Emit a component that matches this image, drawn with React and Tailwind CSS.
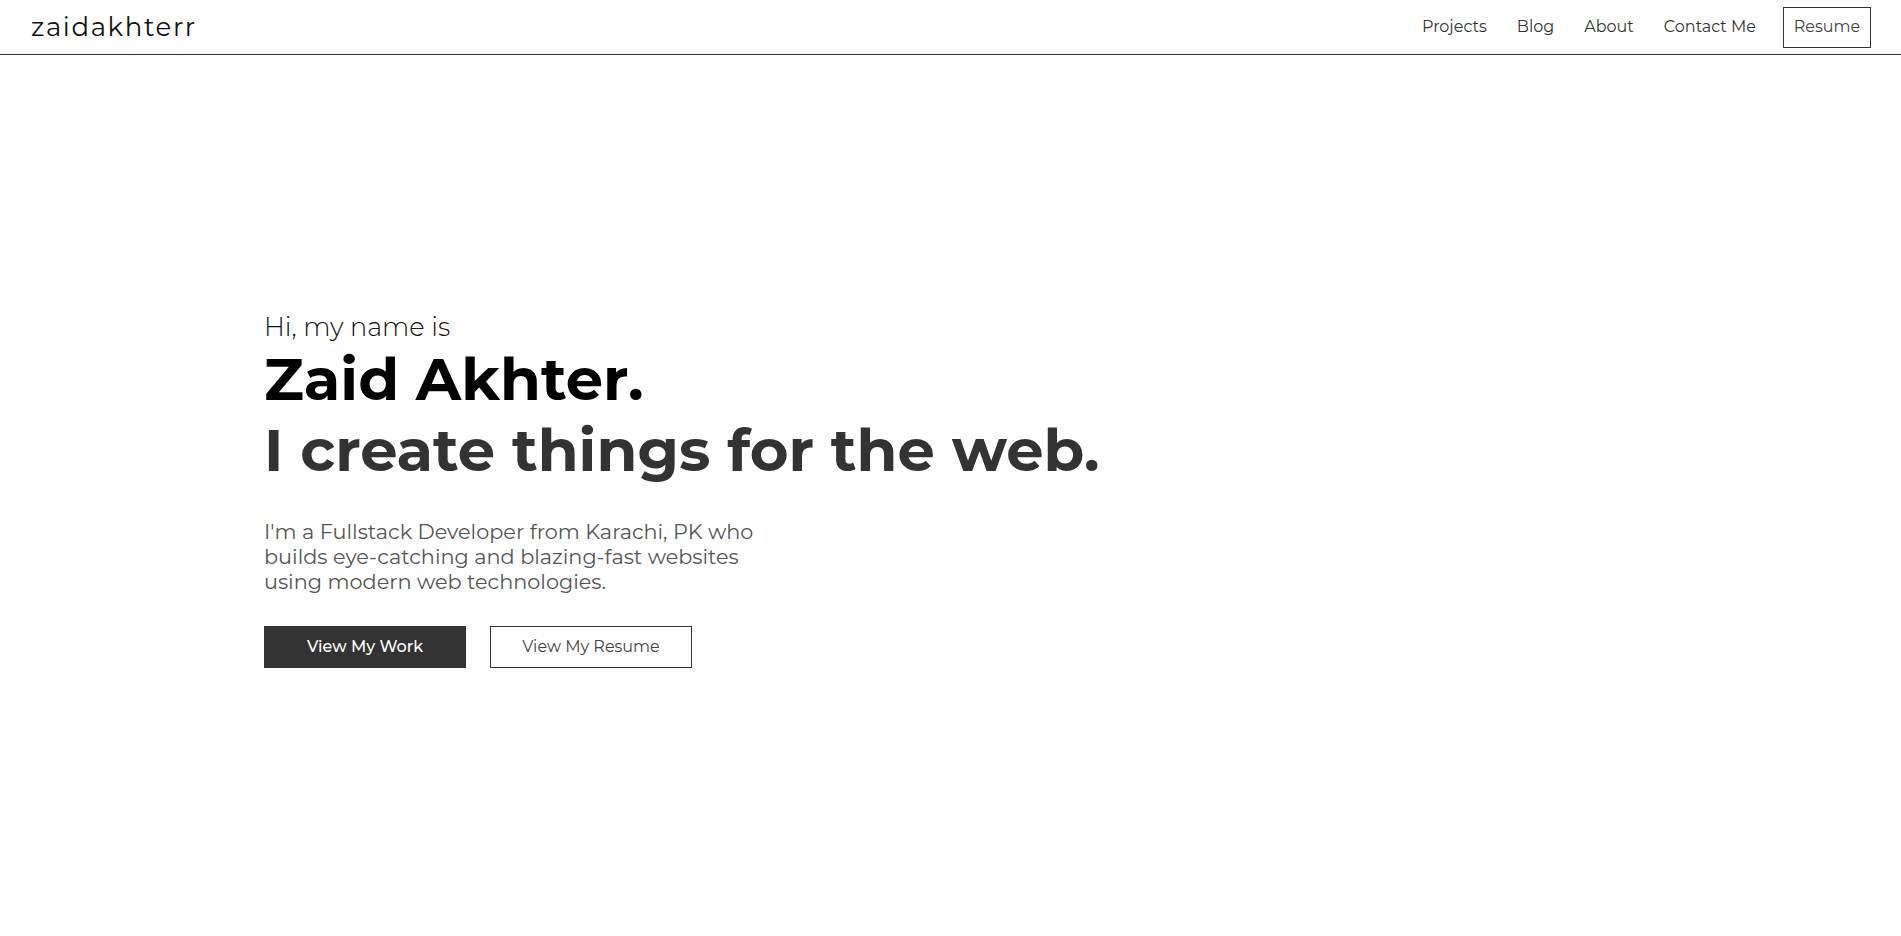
export default function App() {
  const font = { fontFamily: 'Montserrat, "Noto Sans", "Open Sans", sans-serif' };
  return (
    <div className="min-h-screen bg-white" style={font}>
      <header className="flex h-[55px] items-center justify-between border-b border-[#333] pl-[31px] pr-[30px]">
        <div className="text-[26px] tracking-[1.6px] text-[#111]">zaidakhterr</div>
        <nav className="flex items-center text-[16px] text-[#333]">
          <a className="mr-[30px]">Projects</a>
          <a className="mr-[30px]">Blog</a>
          <a className="mr-[30px]">About</a>
          <a className="mr-[27px]">Contact Me</a>
          <a className="flex h-[41px] w-[88px] items-center justify-center border border-[#333] text-[#444]">Resume</a>
        </nav>
      </header>
      <main className="flex h-[881px] items-center pl-[264px] pb-[11px]">
        <div>
          <p className="text-[25.6px] font-light leading-[1.2] text-[#111]">Hi, my name is</p>
          <h1 className="mt-[1px] text-[59.2px] font-bold leading-[1.2] text-black">Zaid Akhter.</h1>
          <h2 className="text-[59.2px] font-bold leading-[1.2] text-[#333]">I create things for the web.</h2>
          <p className="mt-[33px] max-w-[520px] text-[20.8px] leading-[25px] text-[#555]">
            I'm a Fullstack Developer from Karachi, PK who builds eye-catching and blazing-fast websites using modern web technologies.
          </p>
          <div className="mt-[32px] flex gap-[24px]">
            <button className="h-[42px] w-[202px] bg-[#333] text-[16px] font-medium text-white">View My Work</button>
            <button className="h-[42px] w-[202px] border border-[#333] text-[16px] text-[#444]">View My Resume</button>
          </div>
        </div>
      </main>
    </div>
  );
}
